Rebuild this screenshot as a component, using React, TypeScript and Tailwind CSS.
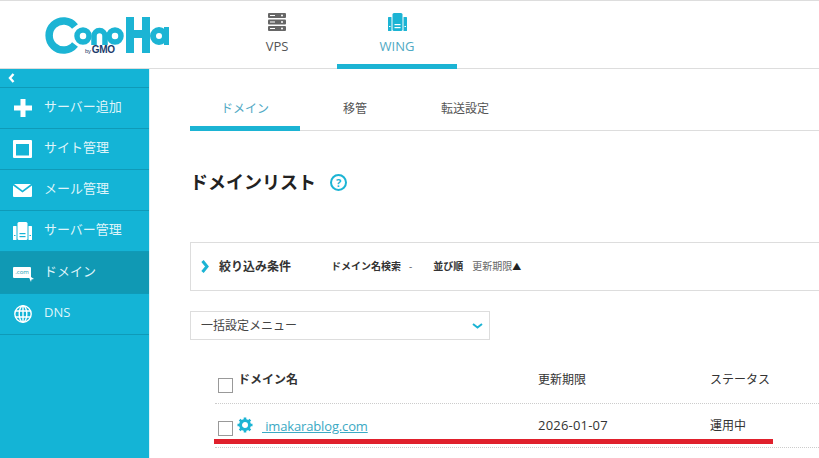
import React from 'react';

const jp = "font-['Open_Sans','Noto_Sans_CJK_JP',sans-serif]";

function Logo() {
  return (
    <div className="relative w-[126px] h-[38px]">
      <svg width="126" height="38" viewBox="0 0 126 38" fill="none" stroke="#1cb4d4">
        <path d="M31 9.5 A14.5 14.5 0 1 0 31 27.5" strokeWidth="7.5" />
        <circle cx="39" cy="19" r="6" strokeWidth="5.5" />
        <path d="M50 28 V19 A5.5 5.5 0 0 1 61 19 V28" strokeWidth="5.5" />
        <circle cx="71" cy="19" r="6" strokeWidth="5.5" />
        <path d="M86 0 V36 M102 0 V36 M86 17 H102" strokeWidth="8" />
        <circle cx="115" cy="19" r="6" strokeWidth="6" />
        <path d="M122.5 10 V28" strokeWidth="5" />
      </svg>
      <span className="absolute left-[41px] top-[28px] text-[10px] leading-[10px] font-black text-[#1a3a6b] font-['Liberation_Sans',sans-serif] whitespace-nowrap tracking-[-0.3px]">
        <span className="text-[6px] font-normal mr-[1px]">by</span>GMO
      </span>
    </div>
  );
}

function ServerIcon() {
  return (
    <svg width="18" height="18" viewBox="0 0 18 18" fill="#666">
      <rect x="0" y="0" width="18" height="5" rx="1" />
      <rect x="0" y="6.5" width="18" height="5" rx="1" />
      <rect x="0" y="13" width="18" height="5" rx="1" />
      <rect x="2" y="2" width="5" height="1" fill="#fff" />
      <rect x="2" y="8.5" width="5" height="1" fill="#fff" />
      <rect x="2" y="15" width="5" height="1" fill="#fff" />
      <circle cx="14" cy="2.5" r="1" fill="#fff" />
      <circle cx="14" cy="9" r="1" fill="#fff" />
      <circle cx="14" cy="15.5" r="1" fill="#fff" />
    </svg>
  );
}

function WingIcon({ color = '#1cb4d4', hole = '#fff' }: { color?: string; hole?: string }) {
  return (
    <svg width="19" height="18" viewBox="0 0 19 18" fill={color}>
      <rect x="0" y="4" width="3.5" height="14" rx="0.5" />
      <rect x="15.5" y="4" width="3.5" height="14" rx="0.5" />
      <rect x="4.5" y="0" width="10" height="18" rx="1.5" />
      <rect x="6.5" y="11" width="6" height="1.2" fill={hole} />
      <rect x="6.5" y="14" width="6" height="1.2" fill={hole} />
      <rect x="1" y="13" width="1.5" height="1" fill={hole} />
      <rect x="16.5" y="13" width="1.5" height="1" fill={hole} />
    </svg>
  );
}

function Nav({ label, icon, active }: { label: string; icon: React.ReactNode; active?: boolean }) {
  return (
    <div className={`flex flex-col items-center w-[120px] pt-[12px] h-[68px] ${active ? 'border-b-[5px] border-[#1cb4d4] text-[#4fa9c4]' : 'text-[#555]'}`}>
      {icon}
      <span className="mt-[6px] text-[13px] leading-[18px]">{label}</span>
    </div>
  );
}

function SideItem({ label, icon, active }: { label: string; icon: React.ReactNode; active?: boolean }) {
  return (
    <div className={`flex items-center border-b border-[#0f9ab8] ${active ? 'h-[42px] bg-[#1099b4]' : 'h-[41px]'}`}>
      <div className="w-[44px] flex justify-center pl-[1px] shrink-0">{icon}</div>
      <span className="text-[13px] text-[#dff4fa] -mt-[2px]">{label}</span>
    </div>
  );
}

function Check() {
  return <div className="w-[15px] h-[15px] border border-[#999] bg-white shrink-0" />;
}

export default function App() {
  return (
    <div className={`w-[819px] h-[458px] overflow-hidden bg-white flex flex-col ${jp}`}>
      <header className="h-[69px] shrink-0 border-t border-b border-[#dddddd] flex">
        <div className="w-[149px] shrink-0 pl-[44px] pt-[16px]">
          <Logo />
        </div>
        <div className="flex ml-[68px]">
          <Nav label="VPS" icon={<ServerIcon />} />
          <Nav label="WING" active icon={<WingIcon />} />
        </div>
      </header>

      <div className="flex flex-1 min-h-0">
        <aside className="w-[150px] shrink-0 bg-[#14b4d6] border-r border-[#dff4f9]">
          <div className="h-[19px] border-b border-[#0f9ab8] flex items-center pl-[8px]">
            <svg width="7" height="10" viewBox="0 0 7 10" fill="none" stroke="#fff" strokeWidth="2.4">
              <path d="M5.5 1 L2 5 L5.5 9" />
            </svg>
          </div>
          <SideItem
            label="サーバー追加"
            icon={
              <svg width="18" height="18" viewBox="0 0 18 18" fill="#fff">
                <path d="M6.5 0 H11.5 V6.5 H18 V11.5 H11.5 V18 H6.5 V11.5 H0 V6.5 H6.5 Z" />
              </svg>
            }
          />
          <SideItem
            label="サイト管理"
            icon={
              <svg width="19" height="18" viewBox="0 0 19 18" fill="#fff" fillRule="evenodd">
                <path d="M1 0 H18 A1 1 0 0 1 19 1 V17 A1 1 0 0 1 18 18 H1 A1 1 0 0 1 0 17 V1 A1 1 0 0 1 1 0 Z M3 4 V15.5 H16 V4 Z" />
              </svg>
            }
          />
          <SideItem
            label="メール管理"
            icon={
              <svg width="19" height="13" viewBox="0 0 19 13" fill="#fff">
                <path d="M1 0 H18 L9.5 6.5 Z" />
                <path d="M0 1.5 L9.5 8.5 L19 1.5 V12 A1 1 0 0 1 18 13 H1 A1 1 0 0 1 0 12 Z" />
              </svg>
            }
          />
          <SideItem label="サーバー管理" icon={<WingIcon color="#fff" hole="#14b4d6" />} />
          <SideItem
            active
            label="ドメイン"
            icon={
              <div className="relative w-[19px] h-[14px] mt-[3px]">
                <div className="w-[18px] h-[11px] bg-white rounded-[1px] text-[6px] leading-[11px] text-center text-[#1099b4]">.com</div>
                <svg className="absolute right-[-2px] bottom-[-1px]" width="6" height="7" viewBox="0 0 6 7" fill="#fff">
                  <path d="M0 0 L6 4 L3.5 4.5 L3 7 Z" />
                </svg>
              </div>
            }
          />
          <SideItem
            label="DNS"
            icon={
              <svg width="18" height="18" viewBox="0 0 18 18" fill="none" stroke="#fff" strokeWidth="1.4">
                <circle cx="9" cy="9" r="8.2" />
                <ellipse cx="9" cy="9" rx="3.8" ry="8.2" />
                <path d="M9 1 V17 M1 6 H17 M1 12 H17" />
              </svg>
            }
          />
        </aside>

        <main className="flex-1 min-w-0 pl-[40px]">
          <div className="flex h-[62px] border-b border-[#dddddd] text-xs text-[#555]">
            <div className="w-[110px] h-[62px] pt-[32px] text-center border-b-[5px] border-[#1cb4d4] text-[#4fa9c4]">ドメイン</div>
            <div className="w-[110px] pt-[32px] text-center">移管</div>
            <div className="w-[110px] pt-[32px] text-center">転送設定</div>
          </div>

          <div className="flex items-center mt-[39px] h-[24px]">
            <h1 className="text-lg font-bold text-[#222]">ドメインリスト</h1>
            <div className="ml-[14px] w-[17px] h-[17px] rounded-full border-2 border-[#1cb4d4] text-[#1cb4d4] text-[11px] font-bold leading-[13px] text-center">?</div>
          </div>

          <div className="mt-[48px] h-[49px] w-[660px] border border-[#dddddd] flex items-center pl-[10px]">
            <svg width="8" height="13" viewBox="0 0 8 13" fill="none" stroke="#1cb4d4" strokeWidth="3">
              <path d="M1.5 1 L6 6.5 L1.5 12" />
            </svg>
            <span className="ml-[10px] text-xs font-bold text-[#333]">絞り込み条件</span>
            <span className="ml-[40px] text-[10px] font-bold text-[#333]">ドメイン名検索</span>
            <span className="ml-[8px] text-[10px] text-[#666]">-</span>
            <span className="ml-[21px] text-[10px] font-bold text-[#333]">並び順</span>
            <span className="ml-[9px] text-[10px] text-[#666]">更新期限<span className="text-[9px] text-[#222]">▲</span></span>
          </div>

          <div className="mt-[20px] h-[29px] w-[300px] border border-[#dddddd] flex items-center justify-between pl-[10px] pr-[6px] text-xs text-[#444]">
            <span>一括設定メニュー</span>
            <svg width="11" height="6" viewBox="0 0 11 6" fill="none" stroke="#1cb4d4" strokeWidth="2">
              <path d="M1 1 L5.5 4.5 L10 1" />
            </svg>
          </div>

          <div className="relative ml-[25px] mt-[27px]">
            <div className="flex h-[37px] border-b border-dotted border-[#cccccc] text-xs font-bold text-[#333]">
              <div className="flex w-[323px] pl-[3px]">
                <div className="mt-[11px]"><Check /></div>
                <span className="ml-[5px] mt-[5px]">ドメイン名</span>
              </div>
              <span className="w-[172px] mt-[5px] font-normal">更新期限</span>
              <span className="mt-[5px] font-normal">ステータス</span>
            </div>
            <div className="flex h-[44px] border-b border-dotted border-[#cccccc] text-xs text-[#333]">
              <div className="flex w-[323px] pl-[3px]">
                <div className="mt-[17px]"><Check /></div>
                <svg className="ml-[4px] mt-[13px]" width="16" height="16" viewBox="0 0 16 16" fill="none" stroke="#1cb4d4">
                  <circle cx="8" cy="8" r="4.5" strokeWidth="3" />
                  <path d="M8 0.5 V3.5 M8 12.5 V15.5 M0.5 8 H3.5 M12.5 8 H15.5 M2.7 2.7 L4.8 4.8 M11.2 11.2 L13.3 13.3 M2.7 13.3 L4.8 11.2 M11.2 4.8 L13.3 2.7" strokeWidth="2.6" />
                </svg>
                <span className="ml-[9px] mt-[14px] text-[13px] tracking-[-0.15px] text-[#3aa9c4] underline">&nbsp;imakarablog.com</span>
              </div>
              <span className="w-[172px] mt-[13px] text-[13px] tracking-[0.2px]">2026-01-07</span>
              <span className="mt-[14px]">運用中</span>
            </div>
            <div className="absolute left-[-1px] top-[72px] w-[559px] h-[5px] bg-[#e0202c]" />
          </div>
        </main>
      </div>
    </div>
  );
}
